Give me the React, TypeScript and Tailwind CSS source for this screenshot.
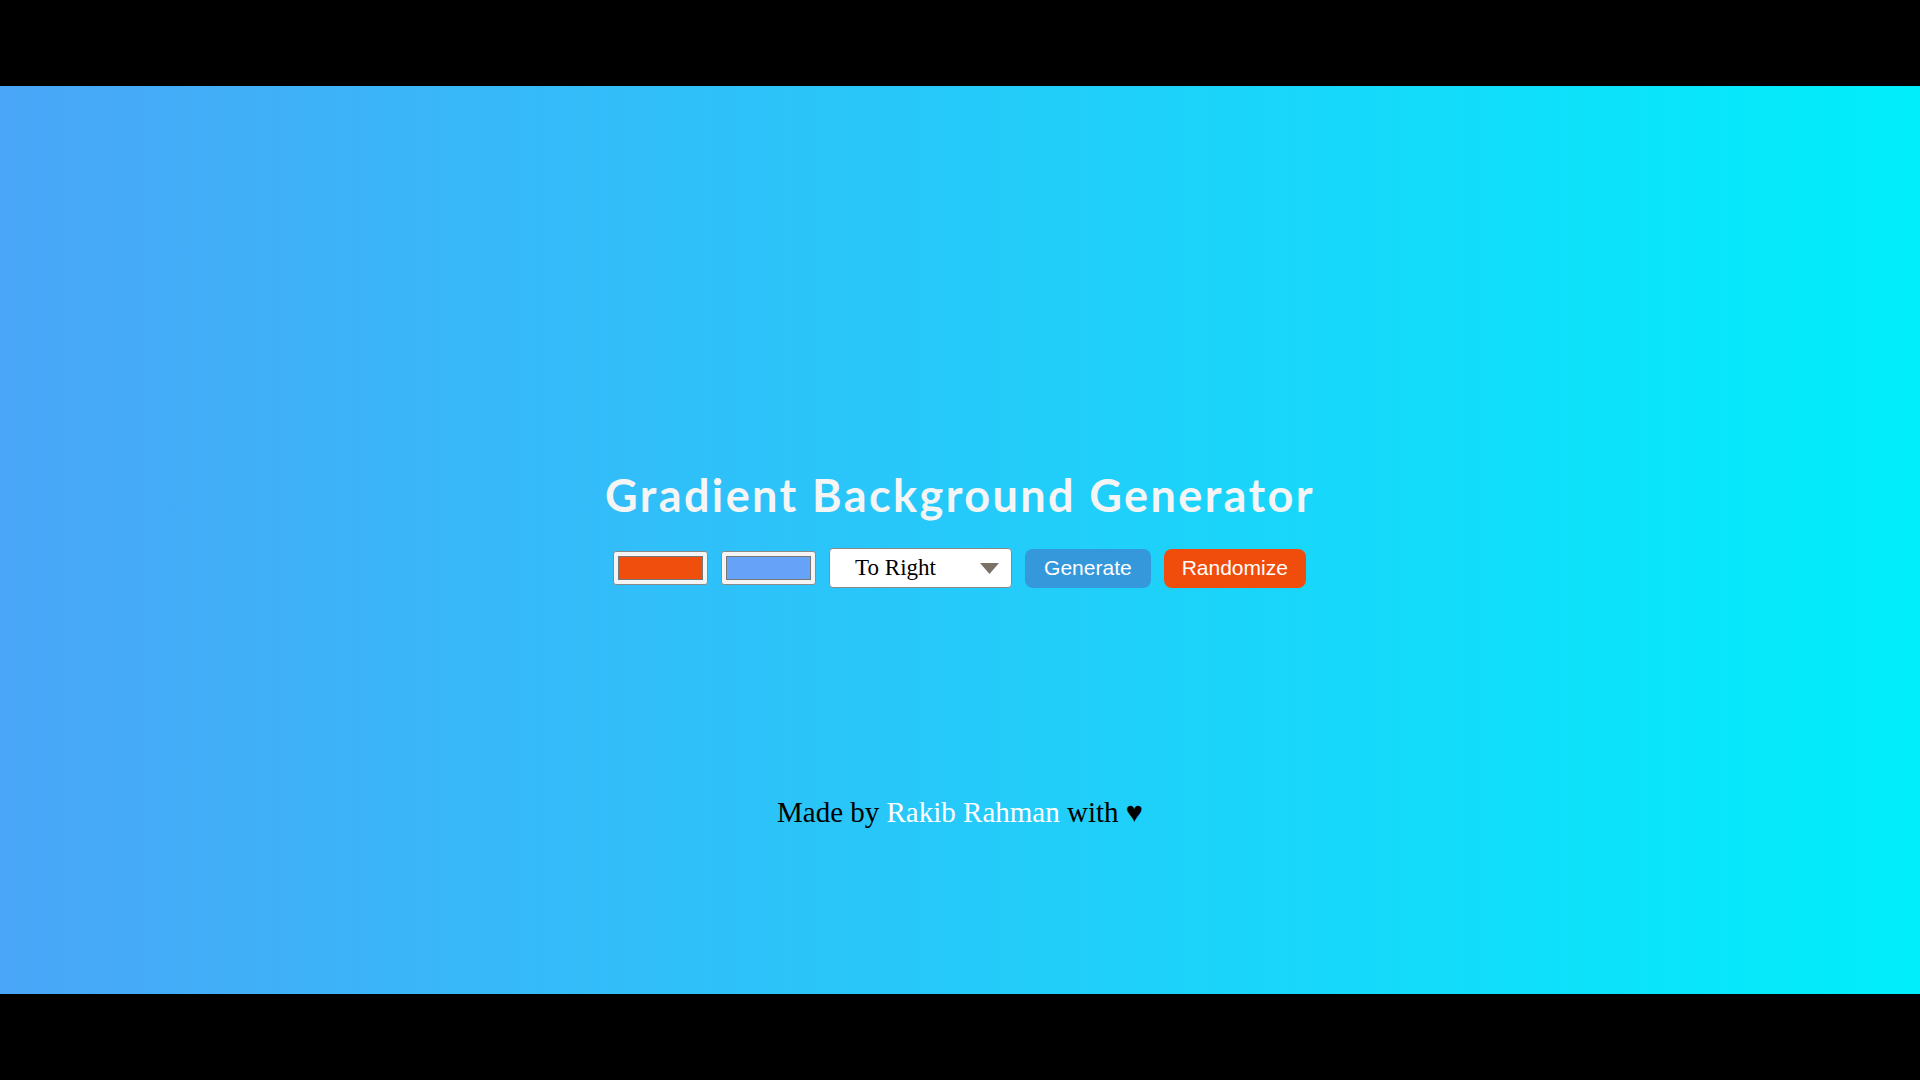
import React from "react";

function ColorBox({ color }: { color: string }) {
  return (
    <div className="w-[95px] h-[34px] rounded-[3px] border border-[#8a8a8a] bg-[#f4f4f4] px-[4px] py-[4px] flex">
      <div className="flex-1 border border-[#777777]" style={{ backgroundColor: color }} />
    </div>
  );
}

export default function App() {
  return (
    <div className="w-[1920px] h-[1080px] bg-black flex flex-col overflow-hidden">
      <div className="h-[86px] shrink-0" />
      <div className="h-[908px] shrink-0 bg-[linear-gradient(to_right,#4aa6f8,#00eefb)] flex flex-col items-center">
        <h1 className="mt-[383px] text-[45px] leading-[53px] font-bold text-[#f5f5f5] font-['Lato','Open_Sans',sans-serif] tracking-[2.4px]">
          Gradient Background Generator
        </h1>
        <div className="mt-[26px] flex items-center gap-[13px] pr-[1px]">
          <ColorBox color="#f04e0c" />
          <ColorBox color="#66a3f8" />
          <div className="w-[183px] h-[40px] rounded-[4px] border border-[#8a8a8a] bg-white flex items-center pl-[25px] pr-[12px]">
            <span className="flex-1 text-[23px] text-black font-['Liberation_Serif',serif]">To Right</span>
            <svg width="19" height="11" viewBox="0 0 19 11">
              <polygon points="0,0 19,0 9.5,11" fill="#7b7166" />
            </svg>
          </div>
          <button className="h-[39px] px-[19px] rounded-[8px] bg-[#3498db] text-white text-[21px] font-['Liberation_Sans',Arial,sans-serif]">
            Generate
          </button>
          <button className="h-[39px] px-[18px] rounded-[8px] bg-[#f04c0b] text-white text-[21px] font-['Liberation_Sans',Arial,sans-serif]">
            Randomize
          </button>
        </div>
        <p className="mt-[208px] text-[29px] leading-[33px] text-black font-['Liberation_Serif',serif]">
          Made by <a className="text-white">Rakib Rahman</a> with ♥
        </p>
      </div>
      <div className="h-[86px] shrink-0" />
    </div>
  );
}
